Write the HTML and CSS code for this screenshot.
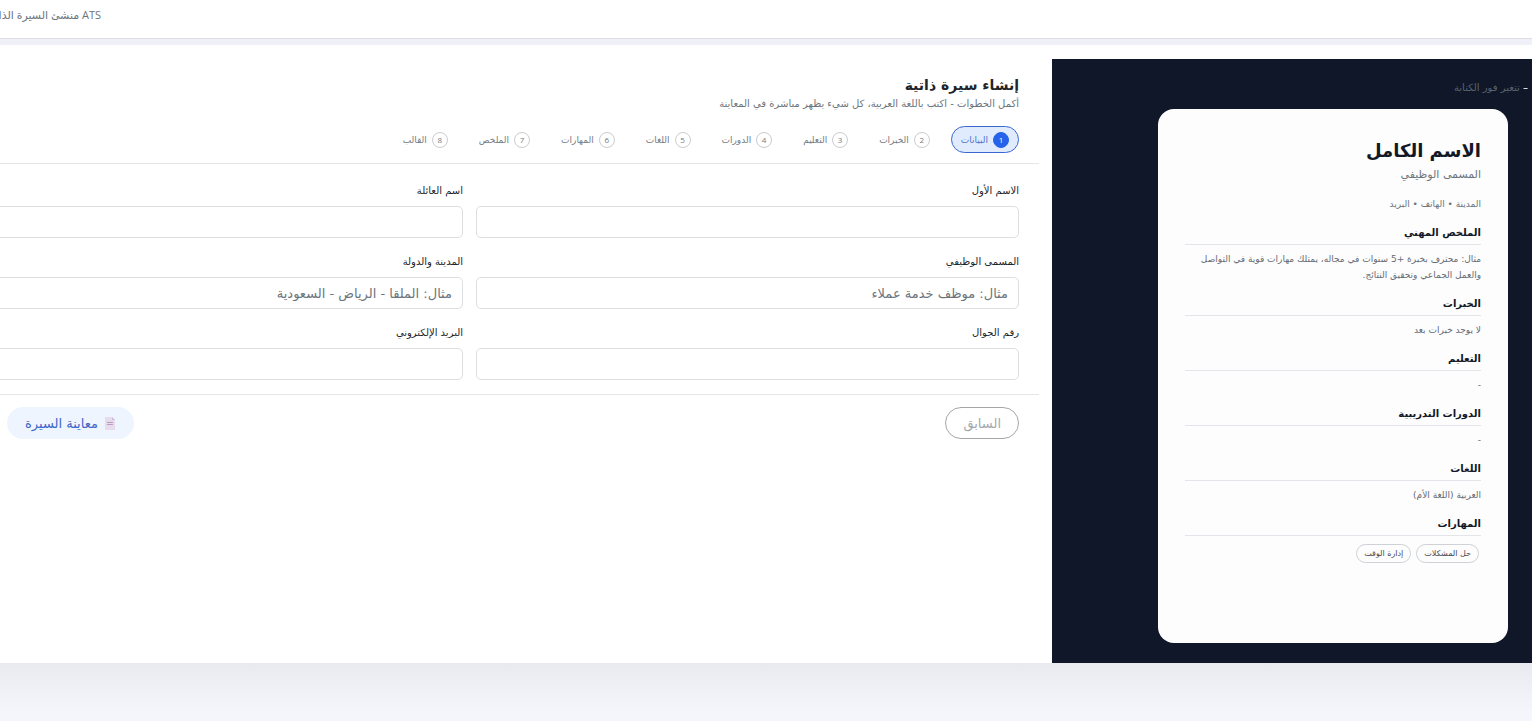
FILE: index.html
```
<!DOCTYPE html>
<html lang="ar" dir="rtl">
<head>
<meta charset="utf-8">
<meta name="viewport" content="width=device-width, initial-scale=1">
<title>إنشاء سيرة ذاتية</title>
<link rel="stylesheet" href="styles.css">
</head>
<body>
<header class="topbar"><span class="brand">ATS منشئ السيرة الذاتية</span></header>
<main class="workspace">
  <aside class="preview">
    <p class="preview-note"><span class="dash">–</span> تتغير فور الكتابة</p>
    <article class="paper">
      <h2 class="name">الاسم الكامل</h2>
      <p class="role">المسمى الوظيفي</p>
      <p class="contact">المدينة • الهاتف • البريد</p>
      <section class="block"><h3>الملخص المهني</h3><p>مثال: محترف بخبرة +5 سنوات في مجاله، يمتلك مهارات قوية في التواصل والعمل الجماعي وتحقيق النتائج.</p></section>
      <section class="block"><h3>الخبرات</h3><p>لا يوجد خبرات بعد</p></section>
      <section class="block"><h3>التعليم</h3><p>-</p></section>
      <section class="block"><h3>الدورات التدريبية</h3><p>-</p></section>
      <section class="block"><h3>اللغات</h3><p>العربية (اللغة الأم)</p></section>
      <section class="block"><h3>المهارات</h3>
        <ul class="tags"><li>حل المشكلات</li><li>إدارة الوقت</li></ul>
      </section>
    </article>
  </aside>
  <form class="editor">
    <div class="editor-head">
      <h1>إنشاء سيرة ذاتية</h1>
      <p class="hint">أكمل الخطوات - اكتب باللغة العربية، كل شيء يظهر مباشرة في المعاينة</p>
      <nav class="steps">
        <button type="button" class="step active"><span class="num">1</span>البيانات</button>
        <button type="button" class="step"><span class="num">2</span>الخبرات</button>
        <button type="button" class="step"><span class="num">3</span>التعليم</button>
        <button type="button" class="step"><span class="num">4</span>الدورات</button>
        <button type="button" class="step"><span class="num">5</span>اللغات</button>
        <button type="button" class="step"><span class="num">6</span>المهارات</button>
        <button type="button" class="step"><span class="num">7</span>الملخص</button>
        <button type="button" class="step"><span class="num">8</span>القالب</button>
      </nav>
    </div>
    <div class="fields">
      <div class="field"><label for="first">الاسم الأول</label><input id="first" type="text"></div>
      <div class="field"><label for="last">اسم العائلة</label><input id="last" type="text"></div>
      <div class="field"><label for="job">المسمى الوظيفي</label><input id="job" type="text" placeholder="مثال: موظف خدمة عملاء"></div>
      <div class="field"><label for="city">المدينة والدولة</label><input id="city" type="text" placeholder="مثال: الملقا - الرياض - السعودية"></div>
      <div class="field"><label for="phone">رقم الجوال</label><input id="phone" type="tel"></div>
      <div class="field"><label for="mail">البريد الإلكتروني</label><input id="mail" type="email"></div>
    </div>
    <div class="actions">
      <button type="button" class="btn prev" disabled>السابق</button>
      <button type="button" class="btn show">
        <svg class="doc" viewBox="0 0 12 13" aria-hidden="true"><path d="M1 0h7l3 3v10H1z" fill="#e6dcee"/><path d="M8 0l3 3H8z" fill="#c9bcd6"/><path d="M3 5.500h6M3 7.500h6" stroke="#b79dc0" stroke-width="1"/></svg>
        معاينة السيرة
      </button>
    </div>
  </form>
</main>
</body>
</html>
```
FILE: styles.css
```
* { box-sizing: border-box; }
body {
  margin: 0;
  min-height: 100vh;
  overflow: hidden;
  background: #f0f1f8;
  color: #212529;
  font-family: "DejaVu Sans", sans-serif;
  font-size: 9px;
}
h1, h2, h3, p, ul { margin: 0; padding: 0; }
button, input { font-family: inherit; }

.topbar {
  display: flex;
  justify-content: flex-end;
  height: 39px;
  padding: 5px 0;
  background: #fff;
  border-bottom: 1px solid #dcdde3;
}
.brand {
  width: 101px;
  white-space: nowrap;
  font-family: "Open Sans", "DejaVu Sans", sans-serif;
  font-size: 11px;
  line-height: 20px;
  color: #6c757d;
}

.workspace {
  display: flex;
  margin-top: 6px;
  padding-top: 14px;
  background: #fff;
}
.workspace::after {
  content: "";
  position: absolute;
  inset: 663px 0 0;
  background: linear-gradient(#e9eaf0, #f4f6fb 50px);
}
.preview {
  flex: 0 0 480px;
  padding: 20px 24px;
  background: #101728;
}
.preview-note {
  margin: 0 -20px 12px 0;
  font-size: 10px;
  line-height: 18px;
  color: #5c636e;
}
.dash { color: #fff; }
.paper {
  width: 350px;
  min-height: 534px;
  padding: 28px 27px;
  background: #fdfdfd;
  border-radius: 16px;
}
.name {
  font-size: 18px;
  line-height: 28px;
  color: #111827;
}
.role {
  font-size: 11px;
  line-height: 20px;
  color: #6c757d;
}
.contact {
  margin-top: 11px;
  font-size: 9px;
  line-height: 16px;
  color: #6c757d;
}
.block { margin-top: 13px; }
.block h3 {
  padding-bottom: 3px;
  border-bottom: 1px solid #e2e5e9;
  font-size: 10px;
  line-height: 16px;
  color: #111827;
}
.block p {
  margin-top: 6px;
  font-size: 9px;
  line-height: 16px;
  color: #666b73;
}
.tags {
  display: flex;
  gap: 5px;
  padding: 8px 2px;
  list-style: none;
}
.tags li {
  padding: 0 7px;
  border: 1px solid #ced2d6;
  border-radius: 10px;
  font-size: 8px;
  line-height: 17px;
  color: #444950;
}

.editor {
  flex: 1;
  min-width: 0;
  margin: 0 13px 0 -60px;
}
.editor-head {
  padding: 16px 20px 10px;
  border-bottom: 1px solid #e3e5e8;
}
h1 {
  font-size: 14px;
  line-height: 20px;
}
.hint {
  font-size: 10px;
  line-height: 18px;
  color: #6c757d;
}
.steps {
  display: flex;
  gap: 11px;
  margin-top: 13px;
}
.step {
  display: flex;
  align-items: center;
  gap: 5px;
  height: 27px;
  padding: 0 9px;
  border: 1px solid transparent;
  border-radius: 14px;
  background: none;
  font-size: 9px;
  color: #757b82;
}
.num {
  width: 16px;
  height: 16px;
  border: 1px solid #c9ccd1;
  border-radius: 50%;
  font-size: 8px;
  line-height: 14px;
  text-align: center;
  font-family: "Open Sans", sans-serif;
}
.step.active {
  background: #e0ecfe;
  border-color: #3a66d0;
  color: #4f73c9;
}
.active .num {
  background: #2563eb;
  border-color: #2563eb;
  color: #fff;
}
.fields {
  display: grid;
  grid-template-columns: 543px 1fr;
  gap: 16px 13px;
  padding: 19px 20px 14px;
}
.field label {
  display: block;
  margin-bottom: 7px;
  font-size: 10px;
  line-height: 16px;
}
.field input {
  display: block;
  width: 100%;
  height: 32px;
  padding: 0 10px;
  border: 1px solid #dcdee1;
  border-radius: 5px;
  background: #fff;
  font-size: 13px;
}
.field input::placeholder { color: #6c757d; opacity: 1; }
.actions {
  display: flex;
  justify-content: space-between;
  padding: 12px 20px;
  border-top: 1px solid #e3e5e8;
}
.btn {
  display: flex;
  align-items: center;
  justify-content: center;
  gap: 6px;
  height: 32px;
  padding: 0 17px;
  border: 1px solid transparent;
  border-radius: 16px;
  font-size: 13px;
}
.prev {
  background: #fff;
  border-color: #a4a7aa;
  color: #a4a8ac;
}
.show {
  margin-inline-end: 47px;
  background: #eef5ff;
  color: #3f66c8;
}
.doc { width: 12px; height: 13px; }
```
